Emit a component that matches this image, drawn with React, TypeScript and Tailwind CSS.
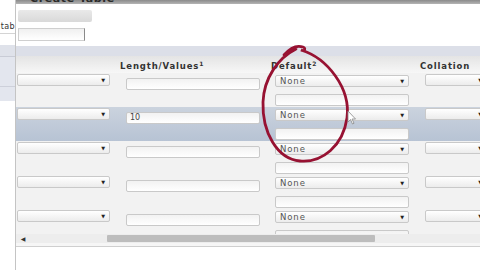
import React from 'react';

const font = { fontFamily: '"DejaVu Sans", "Liberation Sans", sans-serif' };

const Select: React.FC<{ text?: string; className?: string }> = ({ text = '', className = '' }) => (
  <div
    className={`h-[12px] border border-[#c9c9c9] rounded-[2px] bg-linear-to-b from-white to-[#ececec] flex items-center justify-between pl-[4px] pr-[3px] text-[8.5px] tracking-[0.9px] text-[#555] leading-none ${className}`}
  >
    <span>{text}</span>
    <span className="text-[5px] text-[#222]">▼</span>
  </div>
);

const Input: React.FC<{ text?: string; className?: string }> = ({ text = '', className = '' }) => (
  <div
    className={`h-[12px] border border-[#c9c9c9] rounded-[2px] bg-linear-to-b from-[#f2f2f2] to-white flex items-center pl-[3px] text-[8px] text-[#444] leading-none ${className}`}
  >
    {text}
  </div>
);

const Row: React.FC<{ active?: boolean; length?: string }> = ({ active, length }) => (
  <div
    className={`grid grid-cols-[101px_150px_150px_63px] h-[34px] shrink-0 ${
      active ? 'bg-linear-to-b from-[#cbd3de] to-[#b7c3d4]' : 'bg-[#f2f2f2]'
    }`}
  >
    <div className="pl-[1px] pt-[1px]">
      <Select className="w-[93px]" />
    </div>
    <div className="pl-[9px] pt-[5px]">
      <Input className="w-[134px]" text={length} />
    </div>
    <div className="pl-[8px] pt-[2px] flex flex-col gap-[7px]">
      <Select className="w-[134px]" text="None" />
      <Input className="w-[134px]" />
    </div>
    <div className="pl-[8px] pt-[1px]">
      <Select className="w-[62px] rounded-r-none" />
    </div>
  </div>
);

export default function App() {
  return (
    <div className="w-[480px] h-[270px] overflow-hidden relative bg-white flex" style={font}>
      {/* Sidebar */}
      <div className="w-[16px] shrink-0 border-r border-[#c4c4c4] flex flex-col">
        <div className="h-[21px]" />
        <div className="h-[12px] overflow-hidden flex justify-end text-[8px] text-[#333] leading-[12px] tracking-[0.4px]">
          <span className="whitespace-nowrap">Datab</span>
        </div>
        <div className="h-[1px] bg-[#d4d4d4]" />
        <div className="h-[11px]" />
        <div className="h-[12px] bg-[#dfe2ea] border-b border-[#c9ccd6]" />
        <div className="h-[30px] bg-[#e3e6ee] border-b border-[#cdd0da]" />
        <div className="h-[14px] bg-[#e3e6ee]" />
      </div>

      {/* Main */}
      <div className="flex-1 flex flex-col">
        <div className="h-[4px] overflow-hidden bg-linear-to-b from-[#8a8a8a] to-[#b5b5b5] pl-[14px]">
          <div className="-mt-[9px] text-[11px] font-bold text-[#2a2a2a] tracking-[0.6px] whitespace-nowrap">
            Create Table
          </div>
        </div>
        <div className="h-[42px] flex flex-col pl-[2px]">
          <div className="mt-[6px] w-[74px] h-[12px] rounded-[2px] bg-linear-to-b from-[#e9e9e9] to-[#d9d9d9]" />
          <div className="mt-[6px] w-[67px] h-[13px] border border-[#cfcfcf] border-r-[#8a8a8a] bg-linear-to-b from-[#f0f0f0] to-white" />
        </div>

        {/* Table */}
        <div className="h-[188px] overflow-hidden flex flex-col">
          <div className="h-[10px] shrink-0 bg-[#dcdfe8]" />
          <div className="h-[17px] shrink-0 grid grid-cols-[101px_150px_150px_63px] bg-linear-to-b from-[#e4e4e4] to-[#f7f7f7] text-[8.5px] font-bold text-[#333] tracking-[0.85px] leading-none items-end pb-[3px]">
            <div />
            <div className="pl-[3px]">
              Length/Values<sup className="text-[6px]">1</sup>
            </div>
            <div className="pl-[4px]">
              Default<sup className="text-[6px]">2</sup>
            </div>
            <div className="pl-[3px]">Collation</div>
          </div>
          <Row />
          <Row active length="10" />
          <Row />
          <Row />
          <Row />
        </div>

        {/* Scrollbar */}
        <div className="h-[9px] shrink-0 flex items-center bg-[#ededed]">
          <div className="w-[14px] flex justify-center text-[6px] text-[#333]">◀</div>
          <div className="ml-[77px] w-[268px] h-[7px] bg-[#bdbdbd] rounded-[1px]" />
        </div>
        <div className="h-[3px] shrink-0 bg-[#f6f6f6]" />
        <div className="h-[1px] shrink-0 bg-[#cfcfcf]" />
        <div className="flex-1 bg-white" />
      </div>

      {/* Annotation: red hand-drawn circle */}
      <svg className="absolute left-0 top-0 pointer-events-none" width="480" height="270" viewBox="0 0 480 270">
        <path
          d="M284 55 C290 48, 297 45, 303 47 C306 48, 305 52, 301 50 C327 58, 351 88, 347 118 C343 146, 322 163, 300 161 C277 159, 262 132, 263 102 C264 78, 278 58, 296 49"
          fill="none"
          stroke="#971232"
          strokeWidth="2.8"
          strokeLinecap="round"
        />
        {/* Mouse cursor */}
        <path d="M348 111 L348 122 L350.5 119.5 L352.5 124 L354 123.3 L352 119 L355.5 119 Z" fill="#fff" stroke="#888" strokeWidth="0.8" />
      </svg>
    </div>
  );
}
